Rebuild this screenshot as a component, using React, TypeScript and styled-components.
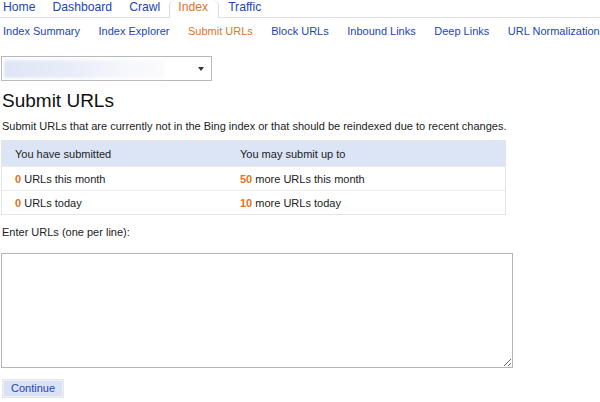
import React from 'react';
import styled, { createGlobalStyle } from 'styled-components';

const GlobalStyle = createGlobalStyle`
  html, body {
    margin: 0;
    padding: 0;
    background: #fff;
  }
  body {
    font-family: Arial, 'Liberation Sans', Helvetica, sans-serif;
    color: #222;
  }
`;

const Page = styled.div`
  width: 600px;
  height: 402px;
  overflow: hidden;
  padding-left: 2px;
  box-sizing: border-box;
`;

const TabBar = styled.nav`
  display: flex;
  align-items: flex-end;
  height: 17px;
  border-bottom: 1px solid #e2e2e2;
  margin-left: -2px;
  padding-left: 3px;
`;

const Tab = styled.a<{ active?: boolean }>`
  display: block;
  font-size: 12.2px;
  line-height: 15px;
  height: 17px;
  box-sizing: border-box;
  padding: ${({ active }) => (active ? '0 10px 0 8px' : '0')};
  margin-right: ${({ active }) => (active ? '9px' : '17px')};
  margin-left: ${({ active }) => (active ? '-8px' : '0')};
  color: ${({ active }) => (active ? '#e0731f' : '#2345b0')};
  background: #fff;
  border: ${({ active }) => (active ? '1px solid #dcdcdc' : 'none')};
  border-top: none;
  border-bottom: none;
  ${({ active }) =>
    active &&
    `
    border-radius: 6px 6px 0 0;
    margin-bottom: -1px;
    height: 18px;
  `}
  text-decoration: none;
  white-space: nowrap;
`;

const SubNav = styled.nav`
  display: flex;
  gap: 18.5px;
  padding: 6px 0 0 1px;
  height: 19px;
`;

const SubLink = styled.a<{ active?: boolean }>`
  font-size: 11px;
  line-height: 14px;
  color: ${({ active }) => (active ? '#e0731f' : '#2345b0')};
  text-decoration: none;
  white-space: nowrap;
`;

const Select = styled.div`
  margin-top: 13px;
  margin-left: -1px;
  width: 211px;
  height: 25px;
  box-sizing: border-box;
  border: 1px solid #b9b9b9;
  background: #fff;
  display: flex;
  align-items: center;
  padding: 2px;
`;

const SelectValue = styled.div`
  flex: 0 0 160px;
  height: 18px;
  background: linear-gradient(90deg, #dde5f6 0%, #e7ecf8 40%, #f6f7fb 75%, #fafafc 100%);
  filter: blur(1.5px);
`;

const Caret = styled.div`
  margin-left: auto;
  margin-right: 5px;
  width: 0;
  height: 0;
  border-left: 3px solid transparent;
  border-right: 3px solid transparent;
  border-top: 4px solid #333;
`;

const Title = styled.h1`
  margin: 9px 0 0;
  font-size: 19px;
  font-weight: normal;
  line-height: 22px;
  color: #111;
`;

const Intro = styled.p`
  margin: 7px 0 0;
  font-size: 11px;
  line-height: 14px;
  color: #222;
`;

const Quota = styled.div`
  margin-top: 7px;
  margin-left: -1px;
  width: 505px;
  border: 1px solid #e4e4e4;
  box-sizing: border-box;
`;

const QuotaRow = styled.div<{ head?: boolean }>`
  display: grid;
  grid-template-columns: 238px 1fr;
  height: ${({ head }) => (head ? '25px' : '23px')};
  align-items: center;
  background: ${({ head }) => (head ? '#dce5f6' : '#fff')};
  border-top: ${({ head }) => (head ? 'none' : '1px solid #ececec')};
  font-size: 11px;
  color: #222;
`;

const Cell = styled.div`
  padding-left: 13px;
  white-space: nowrap;
  &:nth-child(2) {
    padding-left: 0;
  }
`;

const Count = styled.b`
  color: #e0731f;
`;

const FieldLabel = styled.label`
  display: block;
  margin-top: 10px;
  font-size: 11px;
  line-height: 14px;
  color: #222;
`;

const UrlBox = styled.textarea`
  display: block;
  margin: 14px 0 0 -1px;
  width: 512px;
  height: 115px;
  box-sizing: border-box;
  border: 1px solid #b4b4b4;
  resize: both;
  font-family: inherit;
  font-size: 11px;
  padding: 3px;
`;

const ContinueButton = styled.button`
  display: block;
  margin: 12px 0 0 1px;
  width: 60px;
  height: 17px;
  padding: 0;
  border: 1px solid #f0f0f0;
  outline: 1px solid #e6e6e6;
  background: #d8e1f6;
  color: #2345b0;
  font-family: inherit;
  font-size: 11px;
  line-height: 15px;
`;

const tabs = ['Home', 'Dashboard', 'Crawl', 'Index', 'Traffic'];
const sections = [
  'Index Summary',
  'Index Explorer',
  'Submit URLs',
  'Block URLs',
  'Inbound Links',
  'Deep Links',
  'URL Normalization',
];

const App: React.FC = () => (
  <>
    <GlobalStyle />
    <Page>
      <TabBar>
        {tabs.map((t) => (
          <Tab key={t} active={t === 'Index'}>
            {t}
          </Tab>
        ))}
      </TabBar>
      <SubNav>
        {sections.map((s) => (
          <SubLink key={s} active={s === 'Submit URLs'}>
            {s}
          </SubLink>
        ))}
      </SubNav>
      <Select>
        <SelectValue />
        <Caret />
      </Select>
      <Title>Submit URLs</Title>
      <Intro>
        Submit URLs that are currently not in the Bing index or that should be reindexed due to recent changes.
      </Intro>
      <Quota>
        <QuotaRow head>
          <Cell>You have submitted</Cell>
          <Cell>You may submit up to</Cell>
        </QuotaRow>
        <QuotaRow>
          <Cell>
            <Count>0</Count> URLs this month
          </Cell>
          <Cell>
            <Count>50</Count> more URLs this month
          </Cell>
        </QuotaRow>
        <QuotaRow>
          <Cell>
            <Count>0</Count> URLs today
          </Cell>
          <Cell>
            <Count>10</Count> more URLs today
          </Cell>
        </QuotaRow>
      </Quota>
      <FieldLabel>Enter URLs (one per line):</FieldLabel>
      <UrlBox />
      <ContinueButton>Continue</ContinueButton>
    </Page>
  </>
);

export default App;
